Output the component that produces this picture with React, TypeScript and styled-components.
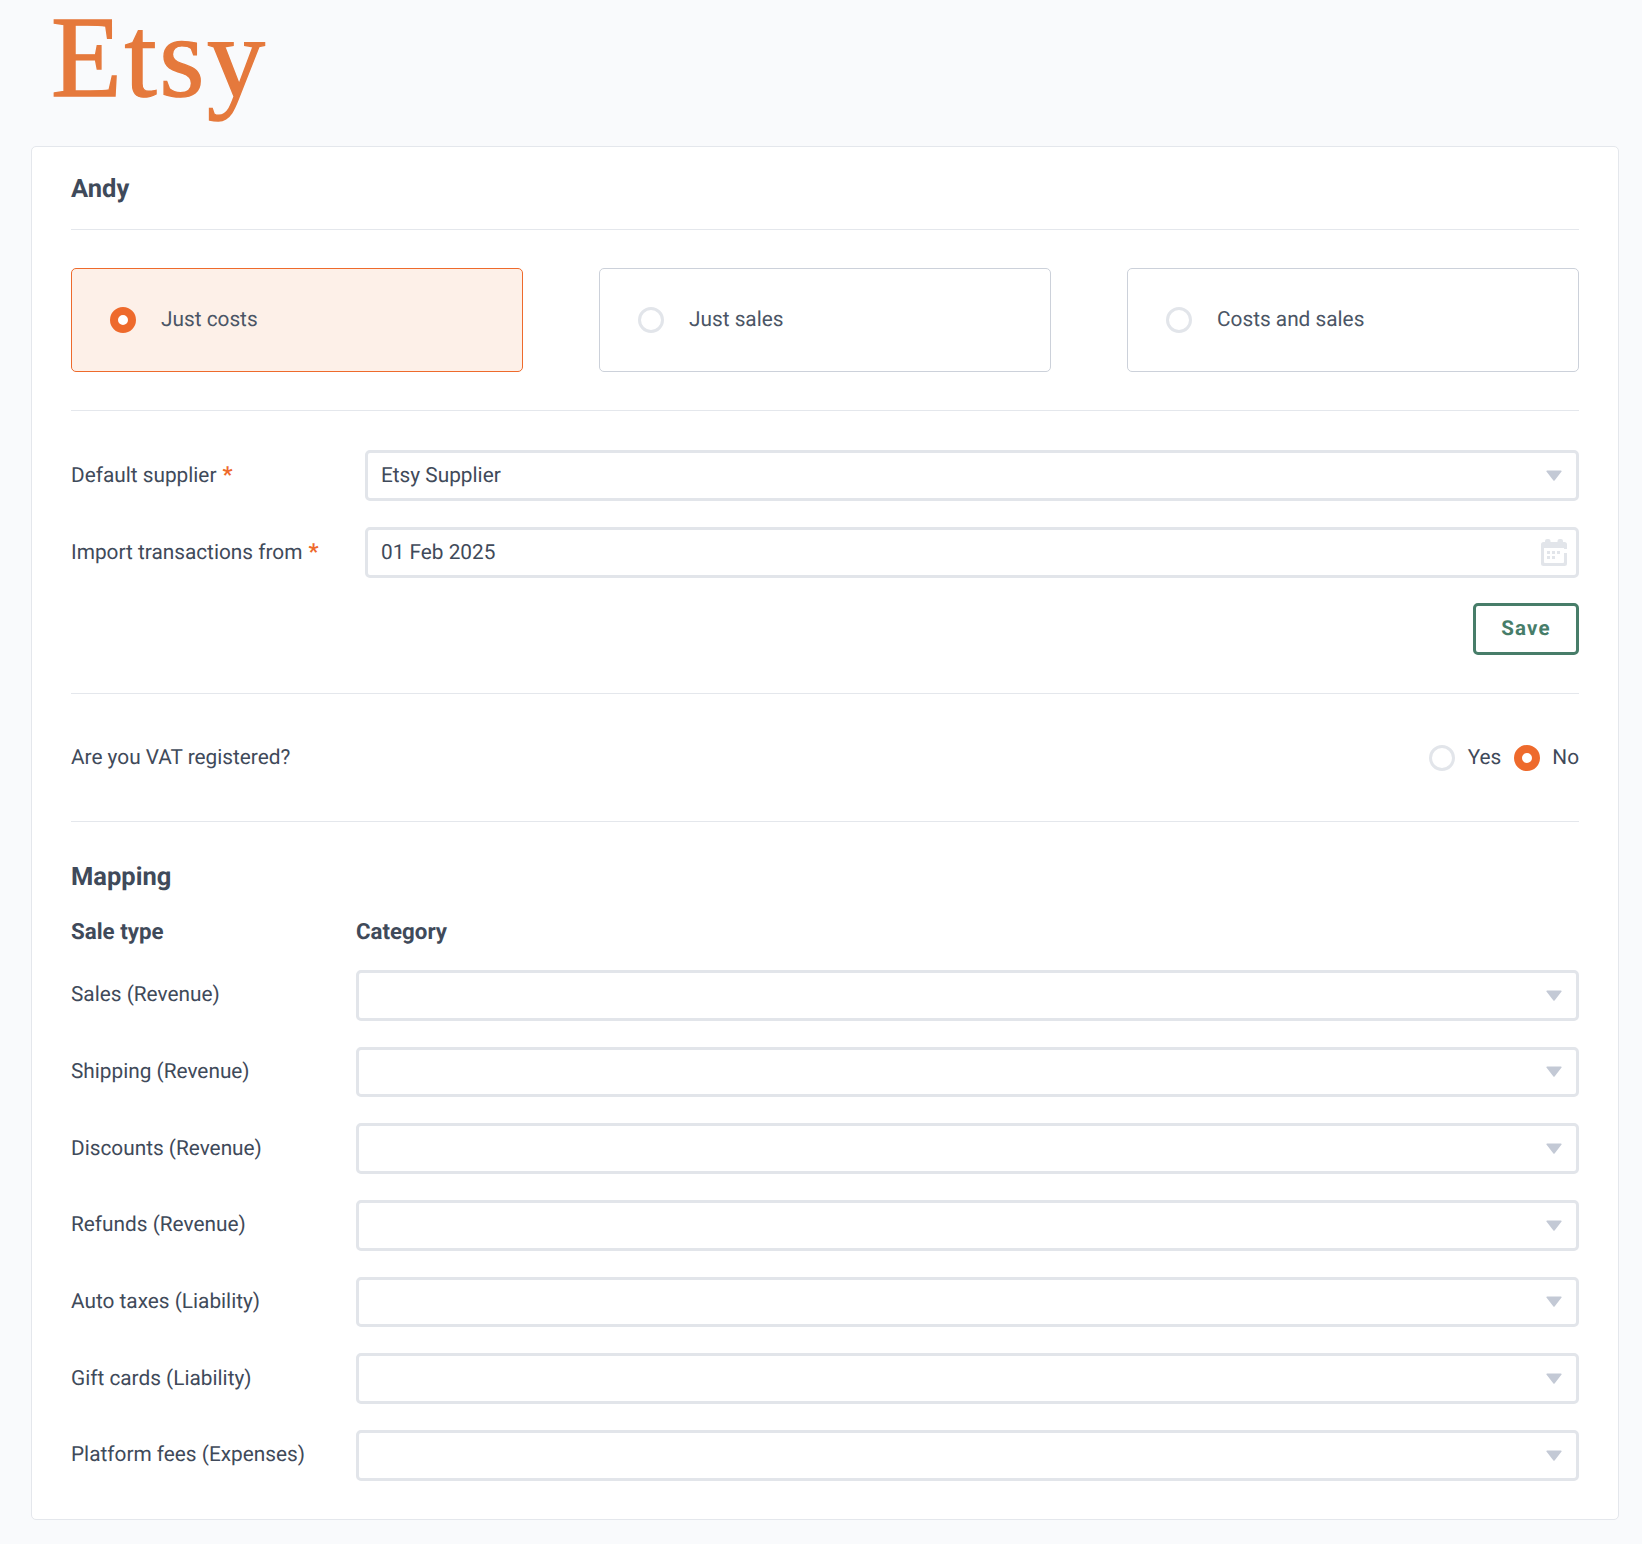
import React from "react";
import styled, { createGlobalStyle } from "styled-components";

const Global = createGlobalStyle`
  html, body { margin: 0; padding: 0; background: #f9fafc; }
  body {
    font-family: Roboto, "Liberation Sans", sans-serif;
    color: #3f4a5a;
    text-rendering: geometricPrecision;
  }
  * { box-sizing: border-box; }
`;

const Page = styled.div`
  width: 1642px;
  height: 1544px;
  padding: 0 23px 0 31px;
`;

const LogoBar = styled.header`
  height: 146px;
  padding-left: 20px;
`;

const Logo = styled.div`
  font-family: "Liberation Serif", "Times New Roman", serif;
  font-size: 116px;
  line-height: 116px;
  color: #e5793c;
  letter-spacing: 2.6px;
  -webkit-text-stroke: 1.4px #e5793c;
`;

const Card = styled.main`
  background: #fff;
  border: 1px solid #e4e7ec;
  border-radius: 5px;
  padding: 0 39px;
  height: 1374px;
`;

const Title = styled.h1`
  margin: 0;
  height: 83px;
  padding-top: 1px;
  display: flex;
  align-items: center;
  font-size: 25.5px;
  font-weight: 700;
  color: #3f4a5a;
  border-bottom: 1px solid #e4e7ec;
`;

const Section = styled.section<{ $top?: number }>`
  padding: ${(p) => p.$top ?? 38}px 0 38px;
  border-bottom: 1px solid #e4e7ec;
`;

const ModeGrid = styled.div`
  display: grid;
  grid-template-columns: repeat(3, 452px);
  column-gap: 76px;
`;

const ModeCard = styled.div<{ $active?: boolean }>`
  height: 104px;
  border: 1px solid ${(p) => (p.$active ? "#ee6a2c" : "#ccd1da")};
  background: ${(p) => (p.$active ? "#fdf0e8" : "#fff")};
  border-radius: 5px;
  padding-left: 38px;
  display: flex;
  align-items: center;
  gap: 25px;
  font-size: 20.8px;
  color: #4b5565;
`;

const Radio = styled.span<{ $on?: boolean }>`
  flex: none;
  width: 26px;
  height: 26px;
  border-radius: 50%;
  background: #fff;
  border: ${(p) => (p.$on ? "8px solid #ee6a2c" : "3px solid #e2e5ea")};
`;

const FormRows = styled.div`
  display: flex;
  flex-direction: column;
  gap: 26px;
`;

const FormRow = styled.div`
  display: grid;
  grid-template-columns: 294px 1fr;
  align-items: center;
  font-size: 20.8px;
`;

const Required = styled.span`
  color: #ee6a2c;
  font-weight: 700;
  font-size: 22px;
  margin-left: 1px;
`;

const Field = styled.div<{ $h?: number }>`
  height: ${(p) => p.$h ?? 51}px;
  border: 3px solid #e2e5ea;
  border-radius: 5px;
  background: #fff;
  padding: 0 9px 0 13px;
  display: flex;
  align-items: center;
  justify-content: space-between;
  font-size: 20.8px;
  color: #3f4a5a;
`;

const Actions = styled.div`
  display: flex;
  justify-content: flex-end;
  margin-top: 25px;
`;

const SaveButton = styled.button`
  width: 106px;
  height: 52px;
  background: #fff;
  border: 3px solid #477d69;
  border-radius: 5px;
  color: #477d69;
  font-family: Roboto, sans-serif;
  font-size: 20.5px;
  font-weight: 700;
  letter-spacing: 1.2px;
  text-rendering: geometricPrecision;
`;

const VatRow = styled.div`
  height: 128px;
  display: flex;
  align-items: center;
  justify-content: space-between;
  font-size: 20.8px;
  border-bottom: 1px solid #e4e7ec;
`;

const VatOptions = styled.div`
  display: flex;
  align-items: center;
  gap: 12.5px;
`;

const MapTitle = styled.h2`
  margin: 0;
  padding-top: 38px;
  font-size: 25.5px;
  line-height: 34px;
  font-weight: 700;
`;

const MapHead = styled.div`
  display: grid;
  grid-template-columns: 285px 1fr;
  margin-top: 24px;
  font-size: 22.3px;
  line-height: 28px;
  font-weight: 700;
`;

const MapRows = styled.div`
  display: flex;
  flex-direction: column;
  gap: 26px;
  margin-top: 24px;
`;

const MapRow = styled.div`
  display: grid;
  grid-template-columns: 285px 1fr;
  align-items: center;
  font-size: 20.8px;
`;

const CaretGlyph = styled.svg`
  flex: none;
  margin-right: 5px;
`;

const Caret = () => (
  <CaretGlyph width="16" height="11" viewBox="0 0 16 11">
    <path d="M1 0.5h14a.7.7 0 0 1 .55 1.1L8.6 10.4a.8.8 0 0 1-1.2 0L.45 1.6A.7.7 0 0 1 1 .5z" fill="#c3c9d5" />
  </CaretGlyph>
);

const CalendarIcon = () => (
  <svg width="26" height="27" viewBox="0 0 26 27">
    <path
      fillRule="evenodd"
      fill="#e2e5ea"
      d="M6 0h1.500a2 2 0 0 1 2 2v1h7V2a2 2 0 0 1 2-2H20a2 2 0 0 1 2 2v1h1.500A2.500 2.500 0 0 1 26 5.500V10h-3V9H3v14a1 1 0 0 0 1 1h18a1 1 0 0 0 1-1v-9h3v10.500A2.500 2.500 0 0 1 23.500 27H2.500A2.500 2.500 0 0 1 0 24.500v-19A2.500 2.500 0 0 1 2.500 3H4V2a2 2 0 0 1 2-2z"
    />
    <path fill="#e2e5ea" d="M6 12h3v3H6zM11 12h3v3h-3zM16 12h3v3h-3zM6 17h3v3H6zM11 17h3v3h-3z" />
  </svg>
);

const mapping = [
  "Sales (Revenue)",
  "Shipping (Revenue)",
  "Discounts (Revenue)",
  "Refunds (Revenue)",
  "Auto taxes (Liability)",
  "Gift cards (Liability)",
  "Platform fees (Expenses)",
];

export default function App() {
  return (
    <Page>
      <Global />
      <LogoBar>
        <Logo>Etsy</Logo>
      </LogoBar>
      <Card>
        <Title>Andy</Title>
        <Section>
          <ModeGrid>
            <ModeCard $active>
              <Radio $on />
              Just costs
            </ModeCard>
            <ModeCard>
              <Radio />
              Just sales
            </ModeCard>
            <ModeCard>
              <Radio />
              Costs and sales
            </ModeCard>
          </ModeGrid>
        </Section>
        <Section $top={39}>
          <FormRows>
            <FormRow>
              <span>
                Default supplier <Required>*</Required>
              </span>
              <Field>
                Etsy Supplier
                <Caret />
              </Field>
            </FormRow>
            <FormRow>
              <span>
                Import transactions from <Required>*</Required>
              </span>
              <Field>
                01 Feb 2025
                <CalendarIcon />
              </Field>
            </FormRow>
          </FormRows>
          <Actions>
            <SaveButton>Save</SaveButton>
          </Actions>
        </Section>
        <VatRow>
          Are you VAT registered?
          <VatOptions>
            <Radio />
            Yes
            <Radio $on />
            No
          </VatOptions>
        </VatRow>
        <MapTitle>Mapping</MapTitle>
        <MapHead>
          <span>Sale type</span>
          <span>Category</span>
        </MapHead>
        <MapRows>
          {mapping.map((m) => (
            <MapRow key={m}>
              {m}
              <Field $h={50.67}>
                <span />
                <Caret />
              </Field>
            </MapRow>
          ))}
        </MapRows>
      </Card>
    </Page>
  );
}
